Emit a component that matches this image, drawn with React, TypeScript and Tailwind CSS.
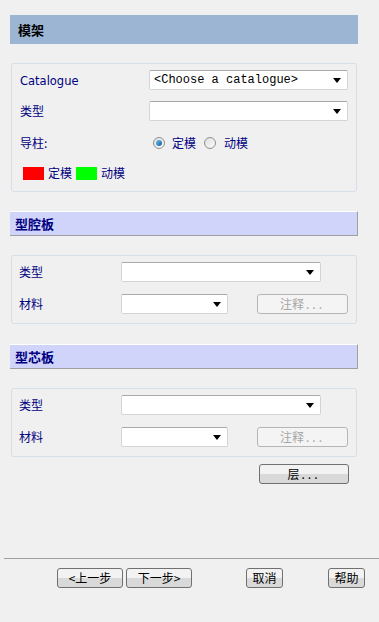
const cjk = { fontFamily: '"Noto Sans CJK SC", "Liberation Sans", sans-serif' };

function Select({ width, text }: { width: string; text?: string }) {
  return (
    <div
      className={`${width} h-[20px] bg-white border border-[#d4d4d4] border-t-[#a9a9a9] rounded-[2px] flex items-center justify-between pl-[4px] pr-[6px]`}
    >
      <span className="text-[12px] text-black leading-none" style={{ fontFamily: '"Liberation Mono", monospace' }}>
        {text ?? ""}
      </span>
      <svg width="8" height="5" viewBox="0 0 8 5">
        <path d="M0 0 L8 0 L4 5 Z" fill="#000" />
      </svg>
    </div>
  );
}

function Radio({ checked }: { checked?: boolean }) {
  return (
    <div className="w-[12px] h-[12px] rounded-full border border-[#8f8f8f] bg-gradient-to-br from-[#e0e0e0] to-[#fafafa] flex items-center justify-center">
      {checked && <div className="w-[6px] h-[6px] rounded-full bg-gradient-to-br from-[#6fc0f0] to-[#0b5a9a]" />}
    </div>
  );
}

function Btn({ label, dots, width, disabled }: { label: string; dots?: boolean; width: string; disabled?: boolean }) {
  return (
    <div
      className={`${width} h-[20px] rounded-[3px] border flex items-center justify-center text-[12px] leading-none ${
        disabled
          ? "border-[#b5b5b5] bg-[#f4f4f4] text-[#a6a6a6]"
          : "border-[#707070] bg-gradient-to-b from-[#f2f2f2] from-50% to-[#d9d9d9] to-50% text-black"
      }`}
      style={cjk}
    >
      {label}
      {dots && <span className="tracking-[3px] ml-[2px]">...</span>}
    </div>
  );
}

function SubHeader({ title, top }: { title: string; top: string }) {
  return (
    <div
      className={`${top} ml-[10px] w-[348px] h-[25px] bg-[#d1d4fa] border-t border-t-white border-b border-r border-[#a0a0a0] flex items-center pl-[5px]`}
    >
      <span className="text-[13px] font-bold text-[#000080]" style={cjk}>
        {title}
      </span>
    </div>
  );
}

function PlateBox() {
  return (
    <div className="mt-[19px] ml-[11px] w-[346px] h-[69px] border border-[#d6dee8] rounded-[3px] flex flex-col pt-[6px] pl-[7px] gap-[12px]">
      <div className="flex items-center">
        <span className="w-[102px] text-[12px] text-[#000080]" style={cjk}>
          类型
        </span>
        <Select width="w-[200px]" />
      </div>
      <div className="flex items-center">
        <span className="w-[102px] text-[12px] text-[#000080]" style={cjk}>
          材料
        </span>
        <Select width="w-[107px]" />
        <div className="ml-[29px]">
          <Btn label="注释" dots width="w-[91px]" disabled />
        </div>
      </div>
    </div>
  );
}

export default function App() {
  return (
    <div className="w-[379px] h-[622px] bg-[#f0f0f0] flex flex-col pt-[15px] overflow-hidden" style={cjk}>
      <div className="ml-[10px] w-[348px] h-[29px] bg-[#9bb5d2] flex items-center pl-[8px]">
        <span className="text-[13px] font-bold text-black">模架</span>
      </div>

      <div className="mt-[19px] ml-[11px] w-[346px] h-[129px] border border-[#d6dee8] rounded-[3px] flex flex-col pt-[6px] pl-[8px]">
        <div className="flex items-center h-[20px]">
          <span
            className="w-[129px] text-[#000080] pt-[3px]"
            style={{ fontFamily: '"DejaVu Sans", sans-serif', fontSize: "11.5px" }}
          >
            Catalogue
          </span>
          <Select width="w-[199px]" text="<Choose a catalogue>" />
        </div>
        <div className="flex items-center h-[20px] mt-[11px]">
          <span className="w-[129px] text-[12px] text-[#000080]">类型</span>
          <Select width="w-[199px]" />
        </div>
        <div className="flex items-center h-[20px] mt-[12px]">
          <span className="w-[133px] text-[12px] text-[#000080]">导柱:</span>
          <Radio checked />
          <span className="ml-[7px] text-[12px] text-[#000080]">定模</span>
          <div className="ml-[8px]">
            <Radio />
          </div>
          <span className="ml-[8px] text-[12px] text-[#000080]">动模</span>
        </div>
        <div className="flex items-center mt-[11px] ml-[3px]">
          <div className="w-[21px] h-[13px] bg-[#ff0000]" />
          <span className="ml-[4px] text-[12px] text-[#000080]">定模</span>
          <div className="ml-[4px] w-[21px] h-[13px] bg-[#00ff00]" />
          <span className="ml-[4px] text-[12px] text-[#000080]">动模</span>
        </div>
      </div>

      <SubHeader title="型腔板" top="mt-[19px]" />
      <PlateBox />

      <SubHeader title="型芯板" top="mt-[20px]" />
      <PlateBox />

      <div className="mt-[7px] ml-[259px]">
        <Btn label="层" dots width="w-[90px]" />
      </div>

      <div className="mt-[74px] ml-[4px] w-[375px] h-px bg-[#a0a0a0]" />

      <div className="mt-[9px] flex items-center">
        <div className="ml-[57px]">
          <Btn label="<上一步" width="w-[66px]" />
        </div>
        <div className="ml-[3px]">
          <Btn label="下一步>" width="w-[66px]" />
        </div>
        <div className="ml-[54px]">
          <Btn label="取消" width="w-[37px]" />
        </div>
        <div className="ml-[45px]">
          <Btn label="帮助" width="w-[37px]" />
        </div>
      </div>
    </div>
  );
}
